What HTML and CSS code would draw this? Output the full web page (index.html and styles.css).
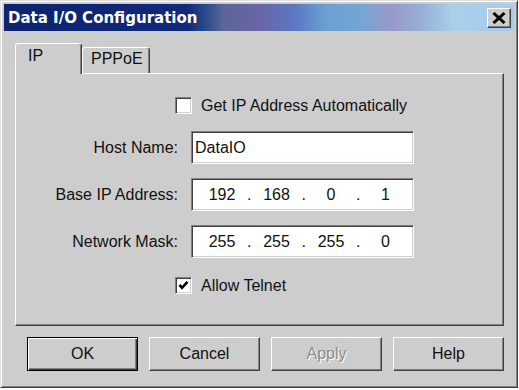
FILE: index.html
```html
<!DOCTYPE html>
<html lang="en">
<head>
    <meta charset="UTF-8">
    <title>Data I/O Configuration</title>
    <link rel="stylesheet" href="styles.css">
</head>
<body>
    <div class="window">
        <div class="titlebar">
            <span class="title">Data I/O Configuration</span>
            <button class="close" type="button">
                <svg width="14" height="12" viewBox="0 0 14 12">
                    <path d="M1.5 1 L12.5 11 M12.5 1 L1.5 11" stroke="#000" stroke-width="3" fill="none"/>
                </svg>
            </button>
        </div>

        <div class="client">
            <div class="tabs">
                <div class="tab active">IP</div>
                <div class="tab">PPPoE</div>
            </div>

            <div class="panel">
                <div class="check">
                    <span class="box"></span>
                    <span>Get IP Address Automatically</span>
                </div>

                <div class="field first">
                    <span class="label">Host Name:</span>
                    <div class="input">DataIO</div>
                </div>

                <div class="field">
                    <span class="label">Base IP Address:</span>
                    <div class="input ip">
                        <span class="oct">192</span><span class="dot">.</span>
                        <span class="oct">168</span><span class="dot">.</span>
                        <span class="oct">0</span><span class="dot">.</span>
                        <span class="oct">1</span>
                    </div>
                </div>

                <div class="field">
                    <span class="label">Network Mask:</span>
                    <div class="input ip">
                        <span class="oct">255</span><span class="dot">.</span>
                        <span class="oct">255</span><span class="dot">.</span>
                        <span class="oct">255</span><span class="dot">.</span>
                        <span class="oct">0</span>
                    </div>
                </div>

                <div class="check telnet">
                    <span class="box">
                        <svg width="13" height="13" viewBox="0 0 13 13">
                            <path d="M2.5 5.8 L5 8.8 L10.5 2.8" stroke="#000" stroke-width="2.6" fill="none"/>
                        </svg>
                    </span>
                    <span>Allow Telnet</span>
                </div>
            </div>

            <div class="buttons">
                <button class="btn default" type="button">OK</button>
                <button class="btn" type="button">Cancel</button>
                <button class="btn disabled" type="button">Apply</button>
                <button class="btn" type="button">Help</button>
            </div>
        </div>
    </div>
</body>
</html>
```

FILE: styles.css
```css
body {
    margin: 0;
    background-color: #fff;
    font-family: "Liberation Sans", Arial, sans-serif;
    font-size: 16px;
    color: #111;
}

/* cadre de la fenetre */
.window {
    width: 518px;
    height: 388px;
    box-sizing: border-box;
    background-color: #cdcdcd;
    border: 1px solid;
    border-color: #dedede #404040 #404040 #dedede;
    box-shadow: inset 1px 1px #fff, inset -1px -1px #808080;
    padding: 3px;
}

.titlebar {
    height: 27px;
    display: flex;
    align-items: center;
    justify-content: space-between;
    padding: 0 3px 0 4px;
    background: linear-gradient(to right,
        #0b2370 0%, #12297a 36%, #2f4f8c 40%, #5a6698 43%,
        #6a64a6 50%, #5b78c2 57%, #6aa0d2 63%, #74a6d4 70%,
        #9898c8 76%, #98b0d8 82%, #a8d0e8 88%, #a6caf0 100%);
}

.title {
    color: #fff;
    font-family: "DejaVu Sans", Verdana, sans-serif;
    font-weight: bold;
    font-size: 15px;
}

.close {
    width: 24px;
    height: 20px;
    padding: 0;
    margin-top: 1px;
    display: flex;
    align-items: center;
    justify-content: center;
    background-color: #cdcdcd;
    border: 1px solid;
    border-color: #fff #404040 #404040 #fff;
    box-shadow: inset -1px -1px #808080;
}

.client {
    padding: 12px 10px 0 11px;
}

/* onglets */
.tabs {
    display: flex;
    align-items: flex-end;
    height: 30px;
}

.tab {
    width: 68px;
    height: 26px;
    box-sizing: border-box;
    padding: 2px 0 0 8px;
    border-top: 1px solid #fff;
    border-left: 1px solid #fff;
    border-right: 1px solid #404040;
    border-radius: 3px 3px 0 0;
    box-shadow: inset -1px 0 #808080;
}

.tab.active {
    width: 67px;
    height: 31px;
    padding: 3px 0 0 12px;
    margin-bottom: -1px;
    position: relative;
    z-index: 1;
    background-color: #cdcdcd;
}

.panel {
    height: 253px;
    box-sizing: border-box;
    padding-top: 23px;
    border: 1px solid;
    border-color: #fff #404040 #404040 #fff;
    box-shadow: inset -1px -1px #808080;
}

/* cases a cocher */
.check {
    display: flex;
    align-items: center;
    gap: 9px;
    height: 17px;
    padding-left: 159px;
}

.box,
.input {
    box-sizing: border-box;
    background-color: #fff;
    border: 1px solid;
    border-color: #808080 #fff #fff #808080;
    box-shadow: inset 1px 1px #404040, inset -1px -1px #d4d0c8;
}

.box {
    width: 17px;
    height: 17px;
    display: flex;
    align-items: center;
    justify-content: center;
}

.telnet {
    margin-top: 19px;
}

/* champs */
.field {
    display: flex;
    align-items: center;
    margin-top: 14px;
}

.field.first {
    margin-top: 17px;
}

.label {
    width: 162px;
    margin-right: 13px;
    text-align: right;
}

.input {
    width: 223px;
    height: 33px;
    display: flex;
    align-items: center;
    padding-left: 3px;
}

.input.ip {
    padding-left: 10px;
}

.oct {
    width: 40px;
    text-align: center;
}

.dot {
    width: 14.5px;
    text-align: center;
}

/* boutons du bas */
.buttons {
    display: flex;
    gap: 11px;
    margin-top: 11px;
    padding-left: 12px;
}

.btn {
    width: 111px;
    height: 34px;
    box-sizing: border-box;
    padding: 0;
    font-family: "Liberation Sans", Arial, sans-serif;
    font-size: 16px;
    color: #111;
    background-color: #cdcdcd;
    border: 1px solid;
    border-color: #fff #404040 #404040 #fff;
    box-shadow: inset -1px -1px #808080;
}

.btn.default {
    border-color: #000;
    box-shadow: inset 1px 1px #fff, inset -1px -1px #404040, inset -2px -2px #808080;
}

.btn.disabled {
    color: #8c8c8c;
    text-shadow: 1px 1px #fff;
}
```
